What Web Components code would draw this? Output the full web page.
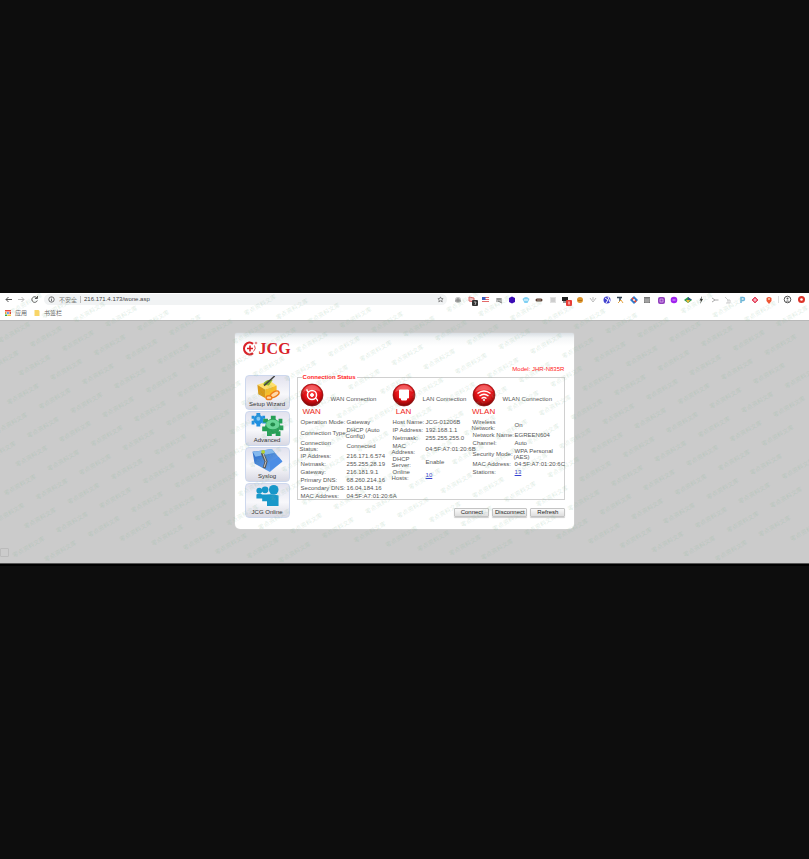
<!DOCTYPE html>
<html lang="zh-CN">
<head>
<meta charset="utf-8">
<title>JCG Router Status</title>
<style>
html,body{margin:0;min-height:100vh;background:#0d0d0d}
body{display:flex;flex-direction:column;justify-content:center;font:6px/8px "Liberation Sans","Noto Sans CJK SC",sans-serif;color:#555}
</style>
</head>
<body>
<browser-window></browser-window>

<script>
const define = (name, html, setup) => {
  const t = document.createElement('template');
  t.innerHTML = html;
  customElements.define(name, class extends HTMLElement {
    constructor() {
      super();
      this.attachShadow({ mode: 'open' }).append(t.content.cloneNode(true));
    }
    connectedCallback() {
      if (setup && !this.ready) { this.ready = true; setup(this, this.shadowRoot); }
    }
  });
};

/* repeated diagonal mark laid over the whole window */
define('water-mark', `
<style>
:host{display:block;position:absolute;inset:0;overflow:hidden;pointer-events:none}
svg{width:100%;height:100%;display:block}
text{font:6px "Noto Sans CJK SC",sans-serif;fill:#86b896;fill-opacity:.26;text-anchor:middle}
</style><svg aria-hidden="true"></svg>`, (el, root) => {
  const svg = root.querySelector('svg');
  const w = el.clientWidth, h = el.clientHeight;
  for (let j = -6; j < 12; j++) for (let i = -25; i < 16; i++) {
    const x = 611 + i * 31.8 - j * 11.6, y = 61 + i * 4.3 + j * 28.8;
    if (x < 0 || x > w || y < 10 || y > h - 8) continue;
    const t = document.createElementNS('http://www.w3.org/2000/svg', 'text');
    t.setAttribute('transform', `translate(${x.toFixed(1)} ${y.toFixed(1)}) rotate(-30)`);
    t.textContent = '零点资料文库';
    svg.append(t);
  }
});

define('extension-icons', `
<style>
:host{display:flex;justify-content:space-between;align-items:center;flex:0 0 321px}
button{all:unset;width:10px;height:10px}
svg{display:block;width:10px;height:10px;overflow:visible}
</style>`, (el, root) => {
  const icons = [
    '<circle cx="5" cy="5" r="3" fill="#c4c4c4"/><path d="M3 5h4M5 3v4M2 6h6" stroke="#888" fill="none"/>',
    '<path d="M2 2l5 1v4L2 6z" fill="#f4c2c2" stroke="#dc6b6b"/><rect x="5" y="5" width="6" height="6" rx="1" fill="#333"/><path d="M7 7h2l-1 3" stroke="#ddd" stroke-width=".7" fill="none"/>',
    '<path d="M2 2h7v5H2z" fill="#fff"/><path d="M2 2.500h7M2 4.500h7M2 6.500h7" stroke="#e36a6a"/><path d="M2 2h3.500v3H2z" fill="#3b5fc0"/>',
    '<path d="M2 3h6v4H2z" fill="#bbb"/><path d="M3 4h4M4 6l4 2" stroke="#777" fill="none"/>',
    '<path d="M5 1.500l3 1.500v4L5 8.500 2 7V3z" fill="#3b0bb5"/>',
    '<path d="M1.500 4Q5 0 8.500 4L6.500 8H3.500z" fill="#7fd0f3"/><path d="M3 5h4" stroke="#fff"/>',
    '<rect x="1.500" y="3.500" width="7" height="3" rx="1.500" fill="#5a4032"/><path d="M3 5h4" stroke="#a88"/>',
    '<path d="M2 2h6v6H2z" fill="#e2e2e2"/><path d="M3 4h4M3 6h4" stroke="#bbb"/>',
    '<path d="M1 2h6v4H1z" fill="#222"/><path d="M2 7h4" stroke="#333"/><rect x="5" y="5" width="6" height="6" rx="1" fill="#ea3b35"/><path d="M8 6.500v3" stroke="#fff"/>',
    '<circle cx="5" cy="5" r="3" fill="#dd952b"/><path d="M3 5.500h4" stroke="#b36f15"/>',
    '<path d="M2 3l3 4 3-4M5 2v3" fill="none" stroke="#bbb"/>',
    '<circle cx="5" cy="5" r="3.500" fill="#4141cf"/><path d="M3 3l3 2-2 3M6 2l2 5" fill="none" stroke="#fff"/>',
    '<path d="M2 2.500h5M5 2v4" stroke="#345" stroke-width="1.500"/><path d="M3 8l3-3 2 3" fill="none" stroke="#e5a544"/>',
    '<path d="M5 1l4 4-4 4-4-4z" fill="#2c7dd0"/><path d="M3 3l4 4" stroke="#e44b3c" stroke-width="2"/><circle cx="5" cy="5" r="1" fill="#fff"/>',
    '<rect x="2" y="2" width="6" height="6" fill="#777"/><path d="M2 4h6M4 4v4M6 4v4M2 6h6" stroke="#ccc" stroke-width=".6"/>',
    '<rect x="2" y="2" width="7" height="7" rx="2" fill="#9140bd"/><path d="M4 4h3v3H4z" stroke="#e4b9f3" stroke-width=".7" fill="none"/>',
    '<circle cx="5" cy="5" r="3.300" fill="#a022ee"/><path d="M3.500 5h3" stroke="#dca8ff"/>',
    '<path d="M1 5l4-3 4 3-4 3z" fill="#2f9a48"/><path d="M5 2l4 3H5z" fill="#35558e"/><path d="M3 5h4L5 8z" fill="#eeb63a"/>',
    '<path d="M6 1L3.500 5.500H5L4 9l3-5H5.500z" fill="#333"/>',
    '<path d="M2 3l3 2-3 2M5 5h3.500" fill="none" stroke="#aaa"/>',
    '<path d="M2 2l3 3v3M4 5h3v3H3" fill="none" stroke="#ccc"/>',
    '<path d="M4 8V2.500h2a1.500 1.500 0 0 1 0 3H4" fill="none" stroke="#6bb6df" stroke-width="1.500"/>',
    '<path d="M5 2l3 3-3 3-3-3z" fill="#f06a80" stroke="#e04660"/><path d="M4 5h2" stroke="#fff"/>',
    '<path d="M5 9L2.500 6V3Q5 1 7.500 3v3z" fill="#ee5533"/><circle cx="5" cy="4" r="1" fill="#ffd0b0"/>'
  ];
  icons.forEach((p, i) => {
    const b = document.createElement('button');
    b.setAttribute('aria-label', 'Extension ' + (i + 1));
    b.innerHTML = `<svg viewBox="0 0 10 10">${p}</svg>`;
    root.append(b);
  });
});

define('nav-bar', `
<style>
:host{display:flex;align-items:center;height:13px;background:#fff;color:#777;padding:0 3px 0 4px}
button{all:unset;display:block;width:9px;height:9px}
svg{display:block;width:100%;height:100%;fill:none;stroke:#555}
.nav{display:flex;gap:4px;flex:none}
form{display:flex;align-items:center;flex:1;height:11px;margin:0 6px 0 5px;padding:0 2px 0 4px;border-radius:6px;background:#f1f3f4;box-sizing:border-box}
form svg{width:7px;height:7px;flex:none}
form span{padding:0 3px 0 4px;white-space:nowrap}
input{all:unset;flex:1;min-width:0;border-left:1px solid #bbb;padding-left:3px;height:7px;font:6px/7px "Liberation Sans",sans-serif;color:#444}
form button{width:8px;height:8px}
i{width:1px;height:7px;background:#ddd;margin:0 4px}
.end{display:flex;gap:5px;flex:none}
</style>
<div class="nav">
<button aria-label="Back"><svg viewBox="0 0 9 9"><path d="M8 4.500H2M4.500 2L2 4.500 4.500 7"/></svg></button>
<button aria-label="Forward"><svg viewBox="0 0 9 9" style="stroke:#bbb"><path d="M1 4.500h6M4.500 2L7 4.500 4.500 7"/></svg></button>
<button aria-label="Reload"><svg viewBox="0 0 9 9"><path d="M7 3A2.800 2.800 0 1 0 7.300 5.500M7.500 1v2.500H5"/></svg></button>
</div>
<form>
<svg viewBox="0 0 7 7"><circle cx="3.500" cy="3.500" r="2.700" stroke-width=".8"/><path d="M3.500 3v2.200M3.500 1.600v.8" stroke-width=".8"/></svg>
<span>不安全</span><input aria-label="Address" value="216.171.4.173/wone.asp">
<button type="button" aria-label="Bookmark"><svg viewBox="0 0 8 8" stroke-width=".7"><path d="M4 1l.9 2h2.100L5.400 4.500 6 6.700 4 5.500 2 6.700l.6-2.200L1 3h2.100z"/></svg></button>
</form>
<extension-icons></extension-icons><i></i>
<div class="end">
<button aria-label="Profile"><svg viewBox="0 0 9 9"><circle cx="4.500" cy="4.500" r="3.300"/><circle cx="4.500" cy="3.500" r="1" fill="#555" stroke="none"/><path d="M2.500 6.500q2-2 4 0z" fill="#555" stroke="none"/></svg></button>
<button aria-label="Update"><svg viewBox="0 0 9 9"><circle cx="4.500" cy="4.500" r="3.500" fill="#dc3228" stroke="none"/><circle cx="4.500" cy="4.500" r="1.300" fill="#fff" stroke="none"/></svg></button>
</div>`);

define('bookmark-bar', `
<style>
:host{display:flex;gap:7px;align-items:center;height:14px;padding-left:5px;background:#fff;border-bottom:1px solid #b8b8b8}
a{display:flex;align-items:center;gap:4px;color:#666;text-decoration:none}
svg{width:6px;height:6px;display:block}
</style>
<a href="#"><svg viewBox="0 0 6 6"><path d="M0 0h6v1.500H0z" fill="#ea4b3b"/><path d="M0 2h1.500v2H0z" fill="#e5a02c"/><path d="M2.200 2h1.500v2H2.200z" fill="#4285f4"/><path d="M4.500 2H6v2H4.500z" fill="#db4437"/><path d="M0 4.500h2V6H0z" fill="#34a853"/><path d="M2.300 4.500H6V6H2.300z" fill="#f4c343"/></svg>应用</a>
<a href="#"><svg viewBox="0 0 6 6"><path d="M.5 0h4l1 1v5h-5z" fill="#f8d568"/></svg>书签栏</a>`);

define('side-item', `
<style>
:host{display:block}
a{display:flex;flex-direction:column;align-items:center;justify-content:flex-end;box-sizing:border-box;height:35px;border:1px solid #cdd8ee;border-radius:4px;background:linear-gradient(#e2e2ee,#f8f8fb 55%,#d9d9e3);color:#333;text-decoration:none;line-height:7px;padding-bottom:1px;white-space:nowrap}
</style>
<a href="#"><slot name="icon"></slot><slot></slot></a>`);

define('action-button', `
<style>
:host{display:block;flex:1}
button{display:block;width:100%;height:9px;box-sizing:border-box;padding:0;border:1px solid #c4c4c4;border-radius:1px;background:linear-gradient(#fafafa,#dedede);box-shadow:0 1px 1px #ccc;color:#222;font:6px/7px "Liberation Sans",sans-serif}
</style><button type="button"><slot></slot></button>`);

define('status-column', `
<style>
:host{display:block}
header{display:grid;grid-template-columns:24px auto;justify-content:start;align-items:center;column-gap:7px;height:37px;white-space:nowrap}
.badge{display:flex;flex-direction:column;align-items:center;color:#f01f22;font-size:8px;line-height:9px}
.badge svg{width:24px;height:24px;display:block}
.badge b{font-weight:normal}
header p{margin:0;padding-bottom:1px;color:#555}
table{border-collapse:collapse;width:100%;table-layout:fixed;line-height:6px}
th,td{padding:0;font-weight:normal;text-align:left;white-space:nowrap;vertical-align:middle;text-indent:1px}
tr{height:8px}tr.tall{height:13px}
th{width:var(--label)}
a{color:#3540d0}
</style>
<header><div class="badge"><svg viewBox="0 0 24 24"><defs><radialGradient id="g" cx=".5" cy=".35" r=".65"><stop offset="0" stop-color="#ff4040"/><stop offset=".6" stop-color="#e01015"/><stop offset="1" stop-color="#7c0505"/></radialGradient></defs><circle cx="12" cy="12" r="11" fill="url(#g)" stroke="#811" stroke-width=".7"/><path d="M3 9a9.300 9.300 0 0 1 18 0Q12 4 3 9z" fill="#fff" opacity=".25"/><g fill="none" stroke="#fff"></g></svg><b></b></div><p></p></header>
<table><tbody></tbody></table>`, (el, root) => {
  const kind = el.getAttribute('kind');
  const glyph = {
    WAN: '<circle cx="12" cy="12" r="4.500" stroke-width="1.500"/><circle cx="12" cy="12" r="1.500" fill="#fff"/><path d="M8.500 9Q6 7 7.500 6.500M15.500 15q3 2.500 1.500 3" stroke-width="1.400"/>',
    LAN: '<path d="M7.500 7h9v8h-2v2h-5v-2h-2z" fill="#fff"/>',
    WLAN: '<path d="M5.500 10.500q6.500-5 13 0M7.500 13q4.500-3.500 9 0M9.500 15.500q2.500-2 5 0" stroke-width="1.400"/><circle cx="12" cy="17" r="1" fill="#fff" stroke="none"/>'
  };
  const data = {
    WAN: [['Operation Mode:', 'Gateway'], ['Connection Type:', 'DHCP (Auto<br>Config)'], ['Connection<br>Status:', 'Connected'], ['IP Address:', '216.171.6.574'], ['Netmask:', '255.255.28.19'], ['Gateway:', '216.181.9.1'], ['Primary DNS:', '68.260.214.16'], ['Secondary DNS:', '16.04.184.16'], ['MAC Address:', '04:5F:A7:01:20:6A']],
    LAN: [['Host Name:', 'JCG-01206B'], ['IP Address:', '192.168.1.1'], ['Netmask:', '255.255.255.0'], ['MAC<br>Address:', '04:5F:A7:01:20:6B'], ['DHCP<br>Server:', 'Enable'], ['Online<br>Hosts:', '<a href="#">10</a>']],
    WLAN: [['Wireless<br>Network:', 'On'], ['Network Name:', 'EGREEN604'], ['Channel:', 'Auto'], ['Security Mode:', 'WPA Personal<br>(AES)'], ['MAC Address:', '04:5F:A7:01:20:6C'], ['Stations:', '<a href="#">13</a>']]
  };
  root.querySelector('g').innerHTML = glyph[kind];
  root.querySelector('b').textContent = kind;
  root.querySelector('p').textContent = kind + ' Connection';
  root.querySelector('tbody').innerHTML = data[kind].map(([k, v]) =>
    `<tr${/<br>/.test(k + v) ? ' class="tall"' : ''}><th scope="row">${k}</th><td>${v}</td></tr>`).join('');
});

define('router-panel', `
<style>
:host{display:block;box-sizing:border-box;width:42%;min-width:338px;background:linear-gradient(#d9dfe4,#f4f6f7 5px,#fff 13px);border-radius:2px 2px 5px 5px;padding:8px 9px 11px 7px;box-shadow:0 0 1px #eee}
.logo{display:flex;align-items:center;height:15px;gap:1px;color:#d92128;font:bold 16px/15px "Liberation Serif",serif}
.logo svg{width:16px;height:15px}
.model{margin:9px 1px 0;text-align:right;color:#f22;line-height:8px}
.main{display:grid;grid-template-columns:45px minmax(0,1fr);column-gap:7px;margin-left:3px}
nav{display:grid;gap:1px;align-content:start;padding-top:2px}
fieldset{margin:0;min-width:0;box-sizing:border-box;height:127px;border:1px solid #d0d0d0;padding:0 0 0 2px}
legend{color:#f22;font-weight:bold;line-height:8px;padding:0 1px;margin-left:2px}
.cols{display:grid;grid-template-columns:92px 80px minmax(0,1fr)}
.cols status-column:first-child{--label:46px}
.cols status-column:nth-child(2){--label:33px}
.cols status-column:nth-child(3){--label:42px}
.actions{display:flex;gap:3px;width:111px;margin:8px 0 0 auto}
svg{display:block}
side-item svg{width:36px;height:26px}
</style>
<div class="logo"><svg viewBox="0 0 16 15"><path d="M11 2.800A5.500 6 0 1 0 11 12.200" fill="none" stroke="#d92128" stroke-width="2.200"/><path d="M12.500 4.500q2 3-1 6" fill="none" stroke="#d92128" stroke-width=".8"/><path d="M8 4.500v6M5 7.500h6" stroke="#d92128" stroke-width="1.600"/><circle cx="14" cy="2" r="1.300" fill="#e98b8f"/></svg>JCG</div>
<p class="model">Model: JHR-N835R</p>
<div class="main">
<nav>
<side-item><svg slot="icon" viewBox="0 0 36 26"><path d="M8 9l13-4 7 5-12 4z" fill="#ffe06a"/><path d="M8 9l8 5v9l-7-4z" fill="#d99a16"/><path d="M16 14l12-4v9l-12 4z" fill="#f7bd28"/><path d="M14 9q2-6 10-5l-4 6z" fill="#8bb52c"/><path d="M15 10L26 0" stroke="#444" stroke-width="1.500"/><ellipse cx="26" cy="19" rx="5" ry="2.500" transform="rotate(-30 26 19)" fill="#ffd9a8" stroke="#ef7d1b" stroke-width="1.500"/><ellipse cx="20" cy="22.500" rx="3" ry="2" fill="#ffd9a8" stroke="#ef7d1b" stroke-width="1.500"/></svg>Setup Wizard</side-item>
<side-item><svg slot="icon" viewBox="0 0 36 26"><g fill="#1f8fe0"><circle cx="9" cy="8" r="5"/><path d="M2 4h3v3H2zM7 1h4v4H7zM13 4h3v3h-3zM2 9h3v4H2zM7 11h4v4H7zM13 9h4v3h-4z"/></g><circle cx="9" cy="7" r="2" fill="#83c9fa"/><g fill="#259f55"><circle cx="24" cy="15" r="8"/><path d="M14 7h5v4h-5zM22 4h5v5h-5zM30 7h4v5h-4zM13 15h5v5h-5zM18 20h5v5h-5zM27 20h5v5h-5zM31 14h4v5h-4z"/></g><ellipse cx="24" cy="13" rx="7" ry="5" fill="#69d597"/><ellipse cx="24" cy="13" rx="2.500" ry="2" fill="#238b4b"/></svg>Advanced</side-item>
<side-item><svg slot="icon" viewBox="0 0 36 26"><defs><linearGradient id="b" x2="1" y2="1"><stop stop-color="#2364c4"/><stop offset="1" stop-color="#79b4f5"/></linearGradient></defs><path d="M3 4L23 1l11 13-13 11L5 16z" fill="url(#b)"/><path d="M3 4L23 1l3 4L6 9z" fill="#83b8ee"/><path d="M21 14l9-5 4 5-13 10z" fill="#4b8de5"/><path d="M13 5l4 9-2 7" fill="none" stroke="#555" stroke-width="3"/><path d="M14 6l3 8-2 6" fill="none" stroke="#ccc"/><circle cx="14" cy="4" r="2" fill="#b4d331"/></svg>Syslog</side-item>
<side-item><svg slot="icon" viewBox="0 0 36 26" fill="#1897c9"><circle cx="10" cy="7" r="3"/><circle cx="16" cy="6" r="3.500"/><circle cx="25" cy="6" r="5"/><path d="M7 11q3-2 6 0l4 0q7-1 13 1v11H18v-5h-5v-3H7z"/></svg>JCG Online</side-item>
</nav>
<div>
<fieldset><legend>Connection Status</legend>
<div class="cols"><status-column kind="WAN"></status-column><status-column kind="LAN"></status-column><status-column kind="WLAN"></status-column></div>
</fieldset>
<div class="actions"><action-button>Connect</action-button><action-button>Disconnect</action-button><action-button>Refresh</action-button></div>
</div>
</div>`);

define('browser-window', `
<style>
:host{display:block;position:relative;background:#cbcbcb;border-bottom:1px solid #555;box-shadow:0 2px 0 #000;margin-bottom:2px}
main{display:flex;justify-content:center;padding:12px 0 34px}
.status{position:absolute;left:0;bottom:6px;width:7px;height:7px;border:1px solid #bbb;border-radius:1px}
</style>
<nav-bar></nav-bar><bookmark-bar></bookmark-bar>
<main><router-panel></router-panel></main>
<div class="status"></div>
<water-mark></water-mark>`);
</script>
</body>
</html>
